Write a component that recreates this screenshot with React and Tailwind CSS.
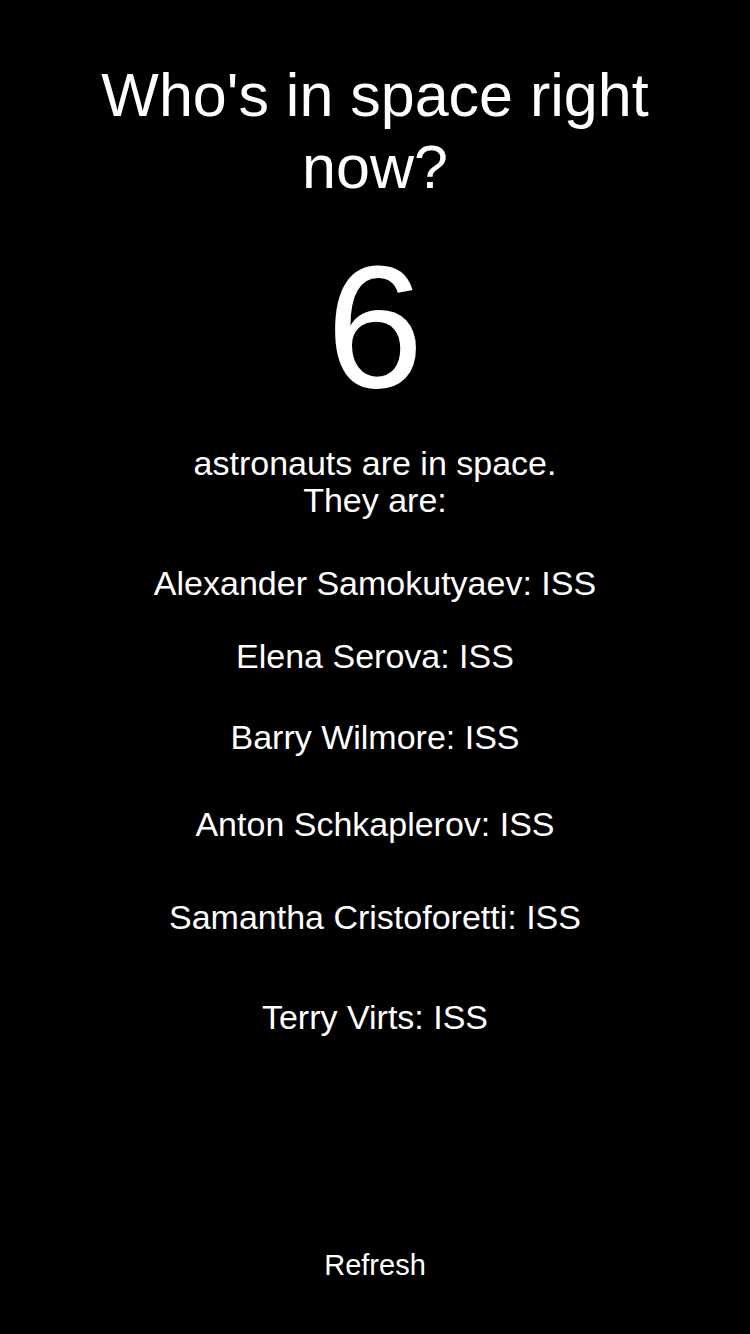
import React from "react";

const astronauts = [
  { name: "Alexander Samokutyaev", craft: "ISS", gap: "mt-[46px]" },
  { name: "Elena Serova", craft: "ISS", gap: "mt-[36px]" },
  { name: "Barry Wilmore", craft: "ISS", gap: "mt-[44px]" },
  { name: "Anton Schkaplerov", craft: "ISS", gap: "mt-[50px]" },
  { name: "Samantha Cristoforetti", craft: "ISS", gap: "mt-[56px]" },
  { name: "Terry Virts", craft: "ISS", gap: "mt-[63px]" },
];

const App = () => {
  return (
    <div className="min-h-screen bg-black text-white flex flex-col items-center text-center font-['Liberation_Sans',Arial,sans-serif]">
      <h1 className="mt-[59px] px-[40px] text-[61px] leading-[72px] font-normal">
        Who's in space right now?
      </h1>
      <div className="mt-[36px] text-[175px] leading-[175px]">
        {astronauts.length}
      </div>
      <p className="mt-[31px] text-[34px] leading-[37px]">
        astronauts are in space.
        <br />
        They are:
      </p>
      {astronauts.map((a, i) => (
        <div key={i} className={`${a.gap} text-[34px] leading-[37px]`}>
          {a.name}: {a.craft}
        </div>
      ))}
      <button className="mt-auto mb-[51px] text-[29px] leading-[36px] text-white">
        Refresh
      </button>
    </div>
  );
};

export default App;
